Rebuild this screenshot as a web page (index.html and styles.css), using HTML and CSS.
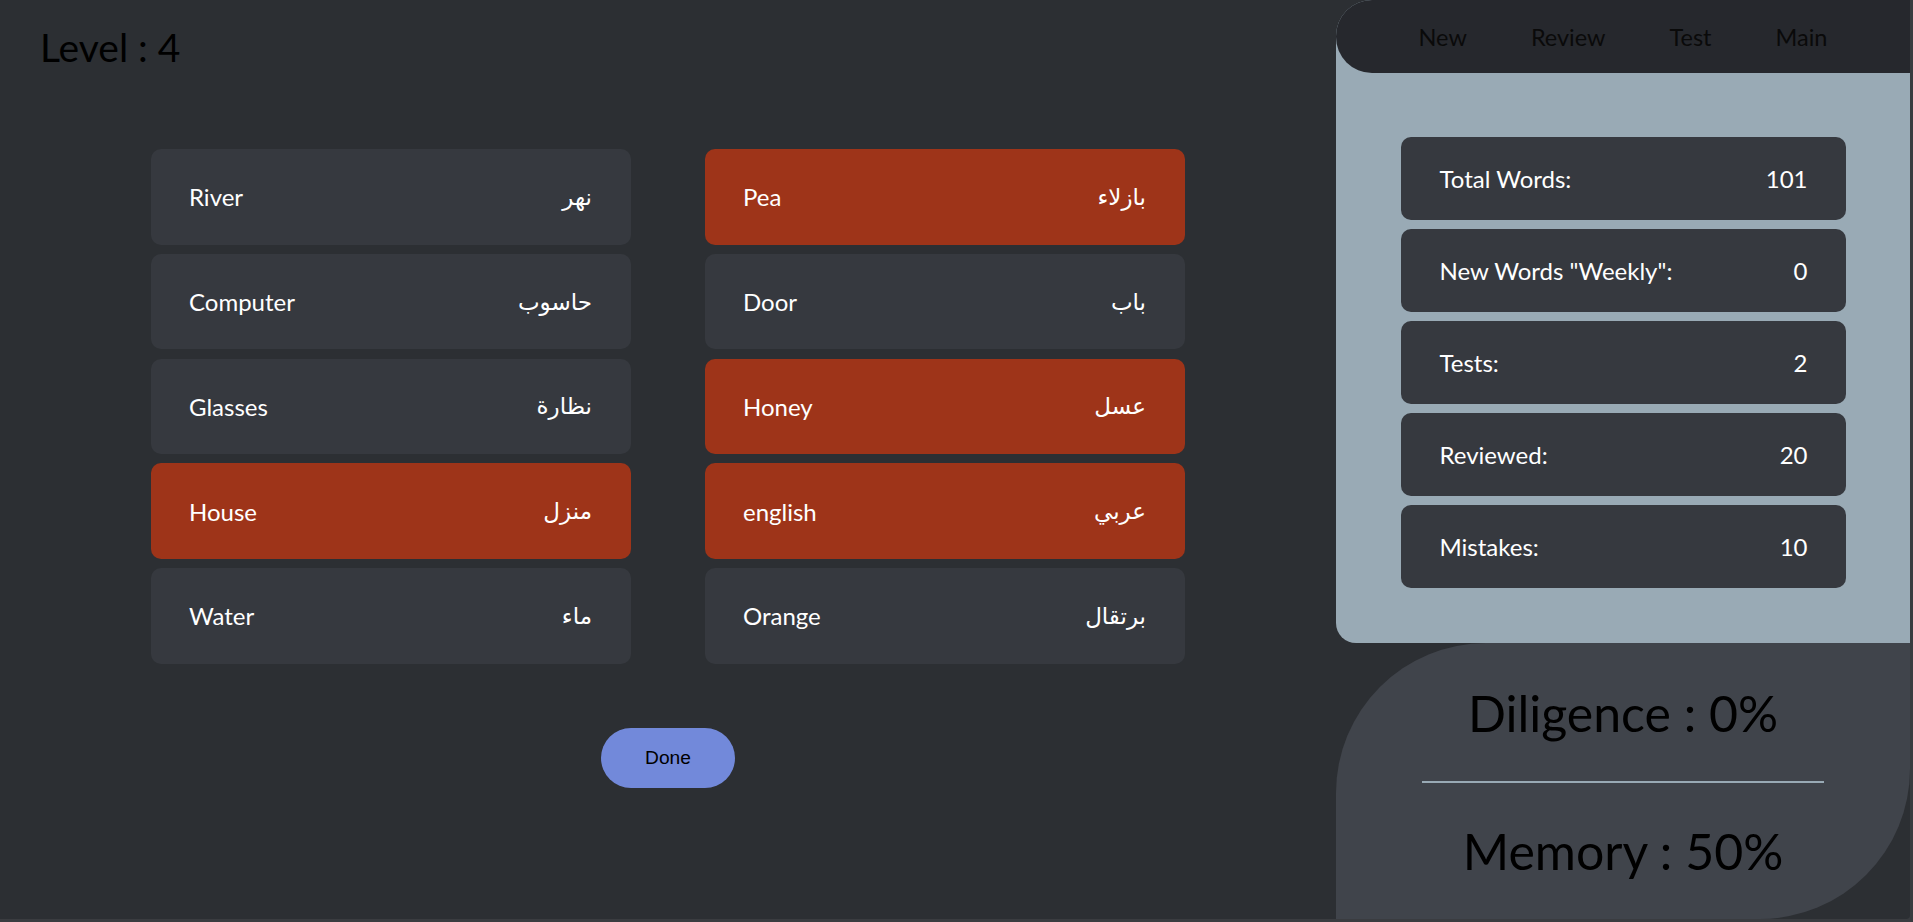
FILE: index.html
```html
<!DOCTYPE html>
<html lang="en">
<head>
<meta charset="utf-8">
<title>Level 4</title>
<link rel="stylesheet" href="styles.css">
</head>
<body>
<div class="app">
  <main class="main">
    <h1 class="level">Level : 4</h1>
    <div class="words">
      <div class="word"><span class="en">River</span><span class="ar" lang="ar">نهر</span></div>
      <div class="word wrong"><span class="en">Pea</span><span class="ar" lang="ar">بازلاء</span></div>
      <div class="word"><span class="en">Computer</span><span class="ar" lang="ar">حاسوب</span></div>
      <div class="word"><span class="en">Door</span><span class="ar" lang="ar">باب</span></div>
      <div class="word"><span class="en">Glasses</span><span class="ar" lang="ar">نظارة</span></div>
      <div class="word wrong"><span class="en">Honey</span><span class="ar" lang="ar">عسل</span></div>
      <div class="word wrong"><span class="en">House</span><span class="ar" lang="ar">منزل</span></div>
      <div class="word wrong"><span class="en">english</span><span class="ar" lang="ar">عربي</span></div>
      <div class="word"><span class="en">Water</span><span class="ar" lang="ar">ماء</span></div>
      <div class="word"><span class="en">Orange</span><span class="ar" lang="ar">برتقال</span></div>
    </div>
    <button class="done">Done</button>
  </main>
  <aside class="side">
    <section class="stats-panel">
      <nav class="nav">
        <a class="nav-link">New</a>
        <a class="nav-link">Review</a>
        <a class="nav-link">Test</a>
        <a class="nav-link">Main</a>
      </nav>
      <div class="stats">
        <div class="stat"><span>Total Words:</span><span>101</span></div>
        <div class="stat"><span>New Words "Weekly":</span><span>0</span></div>
        <div class="stat"><span>Tests:</span><span>2</span></div>
        <div class="stat"><span>Reviewed:</span><span>20</span></div>
        <div class="stat"><span>Mistakes:</span><span>10</span></div>
      </div>
    </section>
    <section class="score-panel">
      <p class="score">Diligence : 0%</p>
      <hr class="divider">
      <p class="score">Memory : 50%</p>
    </section>
  </aside>
</div>
</body>
</html>
```
FILE: styles.css
```css
html {
  background: #3a3c40;
}
body {
  margin: 0;
  font-family: Lato, "DejaVu Sans", sans-serif;
}
.app {
  display: flex;
  width: calc(100vw - 3px);
  height: calc(100vh - 3px);
  background: #2c2f33;
  border-bottom-right-radius: 4px;
  overflow: hidden;
}
.main {
  flex: 1;
  display: flex;
  flex-direction: column;
  align-items: center;
}
.level {
  align-self: flex-start;
  margin: 23.5px 0 0 40px;
  font-size: 39px;
  line-height: 47px;
  font-weight: 400;
  color: #000;
}
.words {
  margin-top: 78.5px;
  display: grid;
  grid-template-columns: 480px 480px;
  grid-auto-rows: 95.5px;
  column-gap: 74px;
  row-gap: 9.25px;
}
.word {
  display: flex;
  justify-content: space-between;
  align-items: center;
  padding: 0 39px 0 38px;
  background: #36393f;
  border-radius: 10px;
  color: #fff;
  font-size: 24px;
}
.word.wrong {
  background: #9e3419;
}
.ar {
  font-family: "DejaVu Sans", sans-serif;
  font-size: 23px;
}
.done {
  margin-top: 64.5px;
  width: 134px;
  height: 60px;
  border: none;
  border-radius: 30px;
  background: #7289da;
  color: #000;
  font-family: "Liberation Sans", Arial, sans-serif;
  font-size: 19.2px;
}
.side {
  width: 574px;
  display: flex;
  flex-direction: column;
}
.stats-panel {
  height: 643px;
  background: #99aab5;
  border-radius: 36px 0 0 20px;
}
.nav {
  height: 73px;
  display: flex;
  justify-content: center;
  align-items: center;
  gap: 64px;
  background: #26282d;
  border-radius: 36px 0 0 36px;
}
.nav-link {
  font-size: 23.5px;
  color: #0a0a0a;
}
.stats {
  width: 445px;
  margin: 64px auto 0;
  display: flex;
  flex-direction: column;
  gap: 9px;
}
.stat {
  height: 83px;
  display: flex;
  justify-content: space-between;
  align-items: center;
  padding: 0 38px 0 39px;
  background: #36393f;
  border-radius: 10px;
  color: #fff;
  font-size: 24px;
}
.score-panel {
  flex: 1;
  display: flex;
  flex-direction: column;
  justify-content: center;
  align-items: center;
  padding-top: 2px;
  background: #40444b;
  border-radius: 150px 0 150px 0;
}
.score {
  margin: 0;
  font-size: 50px;
  line-height: 60px;
  color: #000;
}
.divider {
  width: 70%;
  height: 2px;
  margin: 38px 0;
  border: none;
  background: #99aab5;
}
```
